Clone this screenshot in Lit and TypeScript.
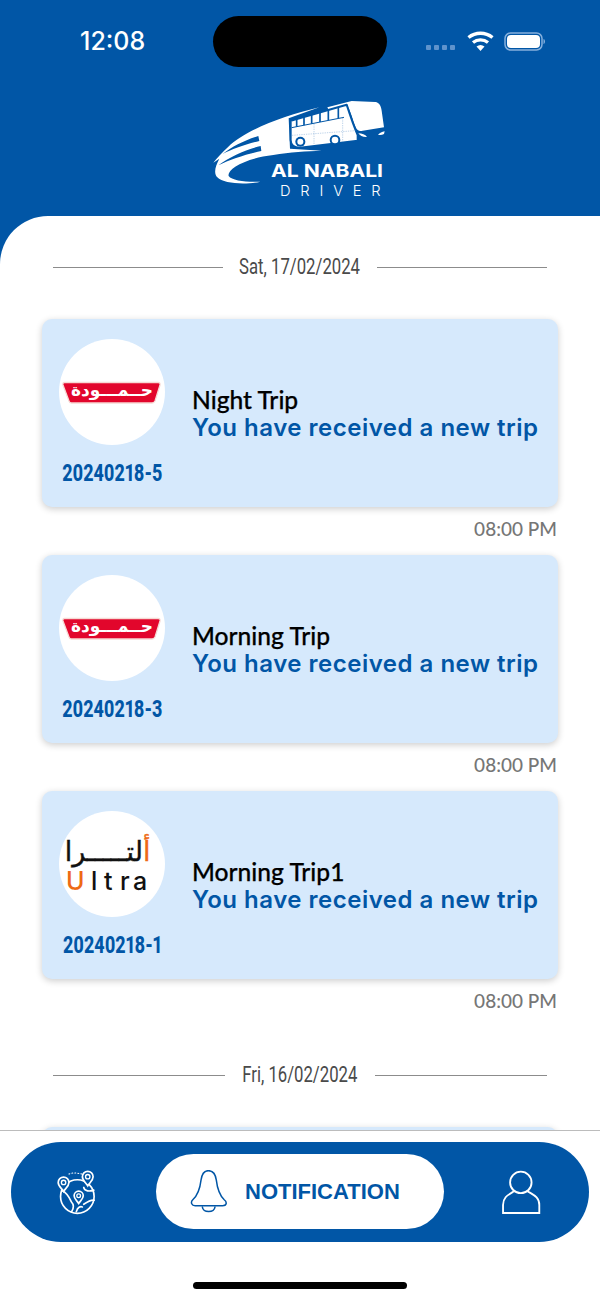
import { LitElement, html, css, svg } from "lit";
import { customElement } from "lit/decorators.js";

const hamoudah = html`<svg class="logo" viewBox="0 0 106 106" aria-label="Hamoudah">
  <path d="M5.500 43.500 H99 Q101.500 43.500 101 46 L96 62 Q95 64 93 64 H12.500 Q10.500 64 10 62 L4 46 Q3.500 43.500 5.500 43.500 Z" fill="#e2062c" stroke="#f6d9d4" stroke-width="1.300"/>
  <text x="53" y="57" text-anchor="middle" class="ar-white">حــمـــودة</text>
</svg>`;

const ultra = html`<svg class="logo" viewBox="0 0 106 106" aria-label="Ultra">
  <text x="84" y="50" text-anchor="end" class="ar-black">لتـــــرا</text>
  <text x="84" y="50" class="ar-orange">أ</text>
  <text y="79" class="lat"><tspan x="7" fill="#ee6a14">U</tspan><tspan x="32">l</tspan><tspan x="45">t</tspan><tspan x="61">r</tspan><tspan x="74">a</tspan></text>
</svg>`;

const mapPin = (x: number, y: number, s: number) => svg`<g transform="translate(${x} ${y}) scale(${s})">
  <path d="M0 22 C-6 12 -16 6 -16 -5 A16 16 0 1 1 16 -5 C16 6 6 12 0 22 Z" fill="#0156a6" stroke="#fff" stroke-width="${5 / s}"/>
  <circle cx="0" cy="-5" r="6.500" fill="none" stroke="#fff" stroke-width="${4 / s}"/>
</g>`;

const trips = [
  { title: "Night Trip", id: "20240218-5", logo: hamoudah },
  { title: "Morning Trip", id: "20240218-3", logo: hamoudah },
  { title: "Morning Trip1", id: "20240218-1", logo: ultra },
];

@customElement("app-root")
export class AppRoot extends LitElement {
  static styles = css`
    :host {
      display: block;
      width: 600px;
      height: 1300px;
      background: #fff;
      overflow: hidden;
      font-family: "Lato", "Liberation Sans", sans-serif;
    }
    .top {
      height: 216px;
      background: #0156a6;
      overflow: hidden;
    }
    .status {
      display: grid;
      grid-template-columns: 213px 174px 1fr;
      padding-top: 16px;
      height: 51px;
    }
    .clock {
      padding-left: 80px;
      font: 500 25px/50px "Inter", "Roboto", sans-serif;
      color: #fff;
    }
    .island {
      background: #000;
      border-radius: 25.500px;
    }
    .sys {
      display: block;
      margin: 11px 0 0 37px;
    }
    .brand {
      display: block;
      margin: 23px 0 0 190px;
    }
    .brand .n {
      font: 700 54px "Inter", "Liberation Sans", sans-serif;
      fill: #fff;
    }
    .brand .d {
      font: 300 44px "Inter", "Liberation Sans", sans-serif;
      fill: #fff;
    }
    .body {
      height: 914px;
      background: #0156a6;
      overflow: hidden;
    }
    .sheet {
      height: 100%;
      box-sizing: border-box;
      background: #fff;
      border-top-left-radius: 48px;
      padding: 39px 42px 0;
      overflow: hidden;
    }
    .day {
      display: flex;
      align-items: center;
      gap: 16px;
      height: 24px;
      margin: 0 11px 40px;
    }
    .day.next {
      margin-top: 36px;
    }
    .day i {
      flex: 1;
      height: 1px;
      background: #8c8c8c;
    }
    .day span {
      display: flex;
      justify-content: center;
      width: 122px;
      white-space: nowrap;
    }
    .day.next span {
      width: 118px;
    }
    .day b {
      flex: none;
      display: inline-block;
      font: 400 22px/24px "Roboto", sans-serif;
      color: #4a4a4a;
      transform: scaleX(0.76);
    }
    .card {
      display: flex;
      align-items: center;
      gap: 27px;
      box-sizing: border-box;
      height: 188px;
      padding: 0 17px;
      background: #d6e9fc;
      border-radius: 10px;
      box-shadow: 0 2px 7px rgba(0, 0, 0, 0.2);
    }
    .left {
      width: 106px;
      display: flex;
      flex-direction: column;
      align-items: center;
    }
    .circle {
      width: 106px;
      height: 106px;
      border-radius: 50%;
      background: #fff;
      overflow: hidden;
    }
    .logo {
      display: block;
      width: 106px;
      height: 106px;
    }
    .ar-white {
      font: 700 17px "DejaVu Sans", sans-serif;
      fill: #fff;
    }
    .ar-black {
      font: 400 27px "DejaVu Sans", sans-serif;
      fill: #111;
      stroke: #111;
      stroke-width: 0.4px;
    }
    .ar-orange {
      font: 400 27px "DejaVu Sans", sans-serif;
      fill: #ee6a14;
      stroke: #ee6a14;
      stroke-width: 0.4px;
    }
    .lat {
      font: 500 25px "Inter", "Liberation Sans", sans-serif;
      fill: #111;
    }
    .id {
      display: flex;
      justify-content: center;
      width: 106px;
      margin-top: 16px;
      white-space: nowrap;
    }
    .id b {
      flex: none;
      display: inline-block;
      font: 800 23px/26px "Roboto", sans-serif;
      font-variant-numeric: proportional-nums;
      color: #0156a6;
      transform: scaleX(0.78);
    }
    .text {
      margin-top: 2px;
    }
    .title {
      font: 500 24.600px/28px "Lato", sans-serif;
      -webkit-text-stroke: 0.25px #000;
      color: #000;
    }
    .sub {
      font: 600 24px/28px "Inter", sans-serif;
      letter-spacing: 0.5px;
      color: #0156a6;
      white-space: nowrap;
    }
    .when {
      height: 48px;
      box-sizing: border-box;
      padding: 10px 1px 0 0;
      text-align: right;
      font: 500 19px/24px "Lato", sans-serif;
      color: #767676;
    }
    .foot {
      border-top: 1px solid #bcbcbc;
      height: 169px;
      box-sizing: border-box;
      padding-top: 11px;
    }
    .nav {
      display: grid;
      grid-template-columns: 145px 288px 145px;
      align-items: center;
      margin: 0 11px;
      height: 100px;
      border-radius: 50px;
      background: #0156a6;
    }
    .nav > svg {
      justify-self: center;
    }
    .globe {
      margin-right: 13px;
    }
    .person {
      margin-left: 9px;
    }
    .active {
      display: flex;
      align-items: center;
      gap: 17px;
      height: 75px;
      margin-top: -1px;
      padding-left: 34px;
      border-radius: 38px;
      background: #fff;
    }
    .active span {
      font: 700 22px "Liberation Sans", sans-serif;
      color: #0156a6;
    }
    .home {
      width: 214px;
      height: 7px;
      margin: 40px auto 0;
      border-radius: 4px;
      background: #000;
    }
  `;

  private card(t: { title: string; id: string; logo: unknown }) {
    return html`
      <div class="card">
        <div class="left">
          <div class="circle">${t.logo}</div>
          <div class="id"><b>${t.id}</b></div>
        </div>
        <div class="text">
          <div class="title">${t.title}</div>
          <div class="sub">You have received a new trip</div>
        </div>
      </div>
      <div class="when">08:00 PM</div>
    `;
  }

  render() {
    return html`
      <div class="top">
        <div class="status">
          <div class="clock">12:08</div>
          <div class="island"></div>
          <svg class="sys" width="125" height="30" viewBox="0 0 125 30">
            <g fill="#5f93cc">
              <rect x="2" y="18" width="5" height="5" rx="1"/>
              <rect x="10" y="18" width="5" height="5" rx="1"/>
              <rect x="18" y="18" width="5" height="5" rx="1"/>
              <rect x="26" y="18" width="5" height="5" rx="1"/>
            </g>
            <g fill="none" stroke="#fff" stroke-width="3.400">
              <path d="M44.500 10.500 A19 19 0 0 1 68.500 10.500"/>
              <path d="M49 15.500 A12 12 0 0 1 64 15.500"/>
            </g>
            <path d="M52.500 19.500 A6.500 6.500 0 0 1 60.500 19.500 L56.500 24 Z" fill="#fff"/>
            <rect x="81" y="6" width="37" height="17" rx="5.500" fill="none" stroke="#86b0dd" stroke-width="1.500"/>
            <rect x="83" y="8" width="33" height="13" rx="4" fill="#fff"/>
            <path d="M119.500 12 C121.500 12.500 121.500 16.500 119.500 17 Z" fill="#86b0dd"/>
          </svg>
        </div>
        <svg class="brand" width="210" height="115" viewBox="0 0 630 345">
          <path d="M388 52 C280 78 165 120 115 170 C95 188 80 205 70 218 C76 214 82 210 88 206 C76 228 70 250 82 262 C100 282 170 285 211 275 C170 277 125 272 116 258 C110 240 160 205 250 195 C300 186 350 184 395 182 L300 176 L296 85 Z" fill="#fff"/>
          <path d="M205 138 C165 150 125 170 98 192 C125 178 165 163 208 153 Z" fill="#0156a6"/>
          <path d="M212 168 C170 178 120 200 85 226 C120 208 170 192 214 183 Z" fill="#0156a6"/>
          <path d="M412 52 L485 33 L556 36 C568 38 573 48 575 62 L582 112 L518 122 C508 125 502 122 497 112 C488 90 482 62 470 44 L416 60 Z" fill="#fff"/>
          <path d="M302 92 L470 44 C480 75 492 110 503 135 L503 152 L330 173 C312 173 302 164 302 150 Z" fill="#fff" stroke="#0156a6" stroke-width="6" stroke-linejoin="round"/>
          <g fill="none" stroke="#0156a6">
            <path stroke-width="3" d="M305 113 L462 82"/>
            <path stroke-width="5" d="M320 87 V110 M342 80.500 V105.600 M365 74 V101 M390 67 V96 M415 60 V91 M445 51.500 V85"/>
          </g>
          <g fill="none" stroke="#86aed8" stroke-width="1.600" stroke-dasharray="4 3">
            <path d="M306 136 L496 122"/>
            <path d="M372 102 V165 M458 84 V155"/>
          </g>
          <circle cx="331" cy="155" r="15" fill="#0156a6"/>
          <circle cx="331" cy="155" r="9" fill="#fff"/>
          <circle cx="435" cy="150" r="16" fill="#0156a6"/>
          <circle cx="435" cy="150" r="10" fill="#fff"/>
          <path d="M505 130 C516 130 526 134 531 141 C520 142 510 138 505 130 Z M564 134 C569 129 576 126 584 124 L582 132 C576 135 570 136 564 134 Z" fill="#fff"/>
          <text class="n" x="243" y="262" textLength="336" lengthAdjust="spacingAndGlyphs">AL NABALI</text>
          <text class="d" x="270" y="319" textLength="302">DRIVER</text>
        </svg>
      </div>
      <div class="body">
        <div class="sheet">
          <div class="day"><i></i><span><b>Sat, 17/02/2024</b></span><i></i></div>
          ${trips.map((t) => this.card(t))}
          <div class="day next"><i></i><span><b>Fri, 16/02/2024</b></span><i></i></div>
          <div class="card"></div>
        </div>
      </div>
      <div class="foot">
        <div class="nav">
          <svg class="globe" width="44" height="47" viewBox="165 145 130 140">
            <g fill="none" stroke="#fff" stroke-width="5" stroke-linecap="round" stroke-linejoin="round">
              <circle cx="231" cy="227" r="50"/>
              <path d="M186 210 C200 215 208 232 214 244 C222 252 220 262 214 272"/>
              <path d="M250 200 C252 212 268 212 280 208"/>
              <path d="M250 250 C262 242 272 236 281 238"/>
              <path d="M228 272 C232 258 240 256 246 258"/>
              <path d="M206 160 C214 156 230 156 244 160" stroke-width="3" stroke-dasharray="3 6"/>
            </g>
            ${mapPin(190, 190, 1)} ${mapPin(262, 173, 1)} ${mapPin(235, 229, 0.85)}
          </svg>
          <div class="active">
            <svg width="38" height="43" viewBox="570 150 114 130">
              <g fill="none" stroke="#0156a6" stroke-width="4.500" stroke-linejoin="round" stroke-linecap="round">
                <path d="M625 152 C612 152 605 165 603 180 C600 205 595 225 578 240 C570 248 575 258 585 258 L668 258 C680 258 683 248 673 240 C657 225 652 205 649 180 C647 165 640 152 625 152 Z"/>
                <path d="M607 262 C610 280 642 280 645 262"/>
              </g>
            </svg>
            <span>NOTIFICATION</span>
          </div>
          <svg class="person" width="42" height="47" viewBox="605 145 125 140">
            <g fill="none" stroke="#fff" stroke-width="5.500" stroke-linejoin="miter">
              <circle cx="667" cy="185" r="32"/>
              <path d="M647 211 C630 222 614 228 614 252 L614 276 L722 276 L722 252 C722 228 704 222 687 211"/>
            </g>
          </svg>
        </div>
        <div class="home"></div>
      </div>
    `;
  }
}
